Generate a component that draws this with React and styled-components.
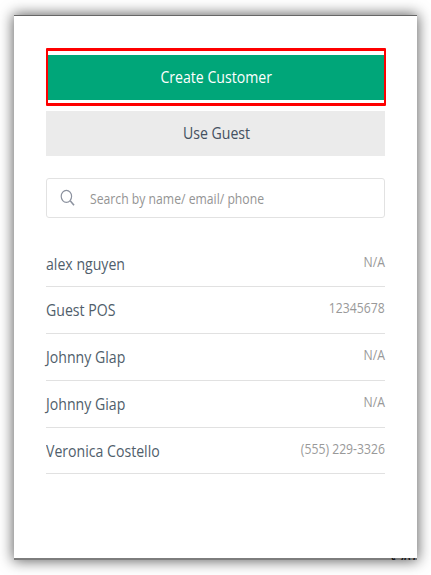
import React from "react";
import styled, { createGlobalStyle } from "styled-components";

const GlobalStyle = createGlobalStyle`
  * { box-sizing: border-box; }
  body {
    margin: 0;
    background: #fff;
    font-family: "Open Sans", "Noto Sans", sans-serif;
    overflow: hidden;
  }
`;

const Page = styled.main`
  height: 575px;
  padding: 15px 14px;
`;

const Panel = styled.section`
  display: flex;
  flex-direction: column;
  width: 403px;
  height: 545px;
  padding: 32px 32px 0 32px;
  border-top: 1px solid #666;
  background: #fff;
  box-shadow: 0 0 13px 1px rgba(0, 0, 0, 0.62);
`;

const Label = styled.span`
  display: inline-block;
  white-space: nowrap;
  font-size: ${(p) => p.$size}px;
  line-height: 24px;
  color: ${(p) => p.$color};
  transform: scaleX(${(p) => p.$squeeze});
  transform-origin: ${(p) => p.$anchor || "left"} center;
`;

const Highlight = styled.div`
  height: 58px;
  margin-right: -0.5px;
  padding: 4px 0;
  border: 3px solid #fe0000;
  border-left-width: 2px;
  border-right-width: 2px;
  border-radius: 1px;
`;

const Button = styled.button`
  display: flex;
  align-items: center;
  justify-content: center;
  width: 100%;
  height: 45px;
  padding: 0 0 2px 1px;
  border: 0;
  font-family: inherit;
  background: ${(p) => (p.$primary ? "#00a679" : "#ebebeb")};
`;

const GuestButton = styled(Button)`
  flex: none;
  margin-top: 5px;
`;

const SearchBox = styled.div`
  display: flex;
  align-items: center;
  flex: none;
  height: 40px;
  margin-top: 22px;
  padding: 0 0 1px 13px;
  gap: 14px;
  border: 1px solid #e2e2e2;
  border-radius: 3px;
`;

const SearchIcon = styled.svg`
  width: 16px;
  height: 18px;
  flex: none;
`;

const List = styled.ul`
  margin: 22px 0 0;
  padding: 0;
  list-style: none;
`;

const Row = styled.li`
  display: flex;
  justify-content: space-between;
  height: 46.9px;
  padding-top: 11.6px;
  border-bottom: 1px solid #e1e1e1;
`;

const Phone = styled.div`
  margin-top: -3px;
`;

const Footer = styled.footer`
  display: flex;
  justify-content: flex-end;
  flex: none;
  height: 2px;
  margin: auto -32px 0 -32px;
  overflow: hidden;
  background: #7d7d7d;
`;

const Total = styled.span`
  margin-top: -4px;
  width: 26px;
  font-size: 12px;
  line-height: 14px;
  font-weight: 600;
  letter-spacing: -0.5px;
  color: #151515;
`;

const customers = [
  { name: "alex nguyen", phone: "N/A" },
  { name: "Guest POS", phone: "12345678" },
  { name: "Johnny Glap", phone: "N/A" },
  { name: "Johnny Giap", phone: "N/A" },
  { name: "Veronica Costello", phone: "(555) 229-3326" },
];

export default function App() {
  return (
    <Page>
      <GlobalStyle />
      <Panel>
        <Highlight>
          <Button $primary>
            <Label $size={17} $color="#fff" $squeeze={0.83} $anchor="center">Create Customer</Label>
          </Button>
        </Highlight>
        <GuestButton>
          <Label $size={17} $color="#445060" $squeeze={0.83} $anchor="center">Use Guest</Label>
        </GuestButton>
        <SearchBox>
          <SearchIcon viewBox="0 0 16 18" fill="none" stroke="#8c929f" strokeWidth="1.2">
            <ellipse cx="6.4" cy="7.3" rx="5.2" ry="6" />
            <path d="M10.2 11.8L14 16.2" strokeWidth="1.6" />
          </SearchIcon>
          <Label $size={14.8} $color="#949494" $squeeze={0.825}>Search by name/ email/ phone</Label>
        </SearchBox>
        <List>
          {customers.map((c) => (
            <Row key={c.name}>
              <Label $size={17} $color="#505e6b" $squeeze={0.83}>{c.name}</Label>
              <Phone>
                <Label $size={14.8} $color="#999" $squeeze={0.825} $anchor="right">{c.phone}</Label>
              </Phone>
            </Row>
          ))}
        </List>
        <Footer><Total>$30.0</Total></Footer>
      </Panel>
    </Page>
  );
}
